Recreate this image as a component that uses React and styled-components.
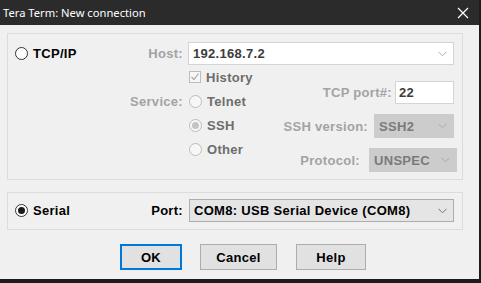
import React from "react";
import styled, { createGlobalStyle } from "styled-components";

const Global = createGlobalStyle`
  html, body { margin: 0; padding: 0; background: #1c1c1c; }
  body { width: 481px; height: 283px; overflow: hidden; }
  * { box-sizing: border-box; }
`;

const Win = styled.div`
  width: 481px;
  height: 283px;
  display: flex;
  flex-direction: column;
  background: #1c1c1c;
  font-family: "Liberation Sans", Arial, sans-serif;
  font-size: 13px;
  font-weight: bold;
  letter-spacing: 0.3px;
`;

const TitleBar = styled.div`
  height: 25px;
  flex: none;
  width: 479px;
  background: #2b2b2b;
  display: flex;
  align-items: center;
  justify-content: space-between;
  padding: 0 10px 0 3px;
`;

const TitleText = styled.span`
  color: #ffffff;
  font-family: "Noto Sans", "Open Sans", sans-serif;
  font-weight: normal;
  font-size: 11.2px;
  letter-spacing: 0;
`;

const Body = styled.div`
  width: 479px;
  height: 254px;
  background: #f0f0f0;
  padding: 8px 0 0 7px;
  display: flex;
  flex-direction: column;
`;

const Group = styled.div`
  width: 456px;
  border: 1px solid #dcdcdc;
  padding: ${(p) => p.$pad};
  height: ${(p) => p.$h}px;
  margin-top: ${(p) => p.$mt || 0}px;
  display: flex;
  flex-direction: column;
`;

const Row = styled.div`
  display: flex;
  align-items: ${(p) => p.$align || "center"};
`;

const LabelCell = styled.div`
  width: 168px;
  flex: none;
  display: flex;
  align-items: center;
  justify-content: space-between;
  padding-top: ${(p) => p.$pt || 0}px;
  align-self: flex-start;
  height: ${(p) => (p.$h ? p.$h + "px" : "auto")};
`;

const Gap = styled.div`
  width: ${(p) => p.$w}px;
  flex: none;
`;

const Label = styled.span`
  color: ${(p) => (p.$disabled ? "#a3a3a3" : "#000000")};
  white-space: nowrap;
  margin-left: ${(p) => p.$ml || 0}px;
`;

const RadioWrap = styled.label`
  display: flex;
  align-items: center;
  gap: 5px;
  height: ${(p) => p.$h || 24}px;
  color: ${(p) => (p.$disabled ? "#6d6d6d" : "#000")};
  white-space: nowrap;
`;

const RadioDot = styled.span`
  width: 13px;
  height: 13px;
  flex: none;
  border-radius: 50%;
  border: 1px solid ${(p) => (p.$disabled ? "#bcbcbc" : "#333333")};
  background: ${(p) => (p.$disabled ? "#f7f7f7" : "#ffffff")};
  display: flex;
  align-items: center;
  justify-content: center;
  &::after {
    content: "";
    width: 7px;
    height: 7px;
    border-radius: 50%;
    background: ${(p) => (p.$disabled ? "#c4c4c4" : "#1a1a1a")};
    display: ${(p) => (p.$checked ? "block" : "none")};
  }
`;

const CheckBox = styled.span`
  width: 12px;
  height: 12px;
  flex: none;
  border: 1px solid #bcbcbc;
  background: #f7f7f7;
  display: flex;
  align-items: center;
  justify-content: center;
`;

const Combo = styled.div`
  width: ${(p) => p.$w}px;
  height: ${(p) => p.$h || 23}px;
  flex: none;
  display: flex;
  align-items: center;
  justify-content: space-between;
  padding: 0 6px 0 4px;
  margin-right: ${(p) => p.$mr || 0}px;
  border: 1px solid ${(p) => p.$border};
  background: ${(p) => p.$bg};
  color: ${(p) => p.$color};
`;

const Field = styled.div`
  width: ${(p) => p.$w}px;
  height: 23px;
  flex: none;
  display: flex;
  align-items: center;
  padding-left: 3px;
  border: 1px solid #d4d4d4;
  background: #ffffff;
  color: #3c3c3c;
`;

const Options = styled.div`
  width: 80px;
  flex: none;
  display: flex;
  flex-direction: column;
`;

const Settings = styled.div`
  flex: 1;
  min-width: 0;
  display: flex;
  flex-direction: column;
  align-items: flex-end;
  padding-top: 16px;
  gap: 10px;
`;

const SettingRow = styled.div`
  display: flex;
  align-items: center;
  gap: ${(p) => p.$gap}px;
`;

const Buttons = styled.div`
  display: flex;
  margin: 14px 0 0 113px;
`;

const Button = styled.button`
  width: ${(p) => p.$w}px;
  height: 26px;
  margin-right: ${(p) => p.$mr || 0}px;
  border: ${(p) => (p.$default ? "2px solid #0078d7" : "1px solid #adadad")};
  background: #e1e1e1;
  font-family: "Liberation Sans", Arial, sans-serif;
  font-size: 13px;
  font-weight: bold;
  letter-spacing: 0.3px;
  color: #000;
  padding: 0;
`;

const Chevron = ({ color }) => (
  <svg width="9" height="6" viewBox="0 0 9 6">
    <path d="M0.5 0.8 L4.5 4.8 L8.5 0.8" fill="none" stroke={color} strokeWidth="1" />
  </svg>
);

const CloseIcon = () => (
  <svg width="12" height="12" viewBox="0 0 12 12">
    <path d="M1 1 L11 11 M11 1 L1 11" stroke="#ffffff" strokeWidth="1.2" />
  </svg>
);

const Tick = () => (
  <svg width="10" height="10" viewBox="0 0 10 10">
    <path d="M1.5 5 L4 7.5 L8.5 1.5" fill="none" stroke="#a8a8a8" strokeWidth="1.2" />
  </svg>
);

export default function App() {
  return (
    <>
      <Global />
      <Win>
        <TitleBar>
          <TitleText>Tera Term: New connection</TitleText>
          <CloseIcon />
        </TitleBar>
        <Body>
          <Group $pad="8px 8px 0 7px" $h={147}>
            <Row>
              <LabelCell>
                <RadioWrap $h={22}>
                  <RadioDot />
                  TCP/IP
                </RadioWrap>
                <Label $disabled>Host:</Label>
              </LabelCell>
              <Gap $w={5} />
              <Combo $w={266} $h={23} $border="#d4d4d4" $bg="#ffffff" $color="#3c3c3c">
                <span>192.168.7.2</span>
                <Chevron color="#b0b0b0" />
              </Combo>
            </Row>
            <Row $align="flex-start">
              <LabelCell $pt={24} $h={48}>
                <span />
                <Label $disabled>Service:</Label>
              </LabelCell>
              <Gap $w={6} />
              <Options>
                <RadioWrap $disabled>
                  <CheckBox>
                    <Tick />
                  </CheckBox>
                  History
                </RadioWrap>
                <RadioWrap $disabled>
                  <RadioDot $disabled />
                  Telnet
                </RadioWrap>
                <RadioWrap $disabled>
                  <RadioDot $disabled $checked />
                  SSH
                </RadioWrap>
                <RadioWrap $disabled>
                  <RadioDot $disabled />
                  Other
                </RadioWrap>
              </Options>
              <Settings>
                <SettingRow $gap={3}>
                  <Label $disabled>TCP port#:</Label>
                  <Field $w={59}>22</Field>
                </SettingRow>
                <SettingRow $gap={6}>
                  <Label $disabled>SSH version:</Label>
                  <Combo $w={80} $h={24} $border="#cccccc" $bg="#cccccc" $color="#7a7a7a">
                    <span>SSH2</span>
                    <Chevron color="#a8a8a8" />
                  </Combo>
                </SettingRow>
                <SettingRow $gap={9}>
                  <Label $disabled>Protocol:</Label>
                  <Combo $w={88} $h={24} $mr={-3} $border="#cccccc" $bg="#cccccc" $color="#7a7a7a">
                    <span>UNSPEC</span>
                    <Chevron color="#a8a8a8" />
                  </Combo>
                </SettingRow>
              </Settings>
            </Row>
          </Group>
          <Group $pad="6px 8px 0 7px" $h={38} $mt={12}>
            <Row>
              <LabelCell>
                <RadioWrap $h={23}>
                  <RadioDot $checked />
                  Serial
                </RadioWrap>
                <Label>Port:</Label>
              </LabelCell>
              <Gap $w={6} />
              <Combo $w={265} $h={23} $border="#adadad" $bg="#e5e5e5" $color="#000">
                <span>COM8: USB Serial Device (COM8)</span>
                <Chevron color="#707070" />
              </Combo>
            </Row>
          </Group>
          <Buttons>
            <Button $w={62} $mr={18} $default>OK</Button>
            <Button $w={77} $mr={19}>Cancel</Button>
            <Button $w={70}>Help</Button>
          </Buttons>
        </Body>
      </Win>
    </>
  );
}
